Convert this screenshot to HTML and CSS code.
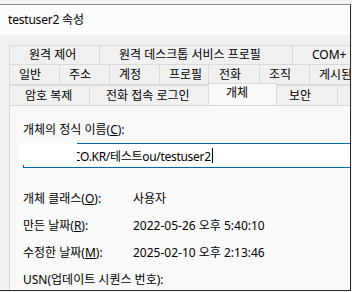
FILE: index.html
```html
<!DOCTYPE html>
<html lang="ko">
<head>
    <meta charset="UTF-8">
    <title>testuser2 속성</title>
    <link rel="stylesheet" href="styles.css">
</head>
<body>
    <div class="window">
        <div class="titlebar">testuser2 속성</div>
        <div class="dialog">
            <div class="tabs">
                <div class="tab-row row-top">
                    <div class="tab t-remote">원격 제어</div>
                    <div class="tab t-rds">원격 데스크톱 서비스 프로필</div>
                    <div class="tab t-com">COM+</div>
                </div>
                <div class="tab-row row-mid">
                    <div class="tab t-small">일반</div>
                    <div class="tab t-small">주소</div>
                    <div class="tab t-small">계정</div>
                    <div class="tab t-small t-profile">프로필</div>
                    <div class="tab t-small t-phone">전화</div>
                    <div class="tab t-small">조직</div>
                    <div class="tab t-small t-cert">게시된 인증서</div>
                </div>
                <div class="tab-row row-low">
                    <div class="tab t-pwd">암호 복제</div>
                    <div class="tab t-dial">전화 접속 로그인</div>
                    <div class="tab t-object active">개체</div>
                    <div class="tab t-security">보안</div>
                    <div class="tab t-env"></div>
                </div>
            </div>

            <div class="panel">
                <div class="field-label">개체의 정식 이름(<u>C</u>):</div>
                <div class="name-box">
                    <span class="name-text">CO.KR/테스트ou/testuser2</span><span class="caret"></span>
                </div>
                <!-- 가려진 부분 -->
                <div class="redact"></div>

                <div class="info-row first">
                    <span class="info-label">개체 클래스(<u>O</u>):</span>
                    <span class="info-value">사용자</span>
                </div>
                <div class="info-row">
                    <span class="info-label">만든 날짜(<u>R</u>):</span>
                    <span class="info-value">2022-05-26 오후 5:40:10</span>
                </div>
                <div class="info-row">
                    <span class="info-label">수정한 날짜(<u>M</u>):</span>
                    <span class="info-value">2025-02-10 오후 2:13:46</span>
                </div>
                <div class="info-row">
                    <span class="info-label">USN(업데이트 시퀀스 번호):</span>
                    <span class="info-value"></span>
                </div>
            </div>
        </div>
    </div>
</body>
</html>
```

FILE: styles.css
```css
/* 속성 대화 상자 */
body {
    margin: 0;
    padding: 0;
    background-color: #f3f3f3;
    font-family: "Noto Sans", "Noto Sans CJK KR", sans-serif;
    font-size: 12px;
    color: #000;
}
.window {
    box-sizing: border-box;
    margin-top: 4px;
    width: 351px;
    height: 287px;
    border-top: 1px solid #8c8c8c;
    border-right: 1px solid #2b2b2b;
    border-bottom: 1px solid #2b2b2b;
    background-color: #f0f0f0;
    overflow: hidden;
    display: flex;
    flex-direction: column;
}
.titlebar {
    height: 30px;
    line-height: 30px;
    padding-left: 8px;
    letter-spacing: -0.2px;
    background-color: #fbfbfb;
    flex-shrink: 0;
}
.dialog {
    flex: 1;
    padding: 10px 0 0 9px;
    overflow: hidden;
}

/* 탭 */
.tabs {
    width: 420px;
}
.tab-row {
    display: flex;
    align-items: flex-end;
}
.tab {
    box-sizing: border-box;
    flex-shrink: 0;
    border-left: 1px solid #d9d9d9;
    border-top: 1px solid #d9d9d9;
    line-height: 18px;
    white-space: nowrap;
    background-color: #f0f0f0;
}
.row-top .tab {
    height: 20px;
}
.row-mid {
    margin-top: -1px;
}
.row-mid .tab {
    height: 21px;
    line-height: 20px;
    border-bottom: 1px solid #d9d9d9;
}
.row-low {
    height: 19px;
}
.row-low .tab {
    height: 19px;
    line-height: 19px;
}
.t-remote { width: 90px; padding-left: 19px; }
.t-rds { width: 193px; padding-left: 19px; }
.t-com { width: 70px; padding-left: 19px; }
.t-small { width: 50px; padding-left: 9px; }
.t-profile { width: 49px; }
.t-phone { width: 51px; padding-left: 10px; }
.t-cert { width: 70px; }
.t-pwd { width: 80px; padding-left: 15px; }
.t-dial { width: 119px; padding-left: 16px; }
.t-object { width: 69px; padding-left: 17px; }
.t-security { width: 61px; padding-left: 12px; margin-left: -1px; }
.t-env { width: 60px; }
.tab.active {
    position: relative;
    z-index: 1;
    height: 22px;
    margin-bottom: -1px;
    line-height: 17px;
    border-right: 1px solid #d9d9d9;
    background-color: #f9f9f9;
}

/* 개체 패널 */
.panel {
    position: relative;
    height: 200px;
    margin-top: 1px;
    padding: 16px 0 0 13px;
    border-top: 1px solid #d9d9d9;
    border-left: 1px solid #d9d9d9;
    background-color: #f9f9f9;
}
.field-label {
    line-height: 16px;
}
.name-box {
    box-sizing: border-box;
    display: flex;
    align-items: center;
    width: 340px;
    height: 25px;
    margin-top: 5px;
    padding-left: 49px;
    border: 1px solid #0067c0;
    background-color: #fff;
    white-space: nowrap;
}
.name-text {
    letter-spacing: -0.3px;
}
.caret {
    display: inline-block;
    width: 1px;
    height: 15px;
    margin-left: 1px;
    background-color: #000;
}
.redact {
    position: absolute;
    left: 9px;
    top: 37px;
    width: 58px;
    height: 22px;
    background-color: #fff;
}
.info-row {
    display: flex;
    height: 27px;
    line-height: 27px;
    white-space: nowrap;
}
.info-row.first {
    margin-top: 17px;
}
.info-label {
    width: 110px;
    flex-shrink: 0;
}
```
